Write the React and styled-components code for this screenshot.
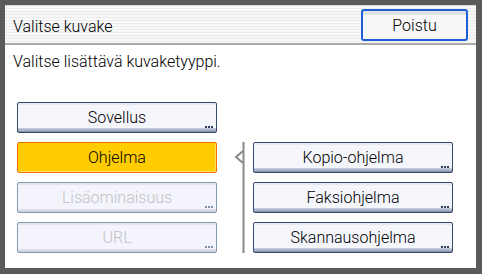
import React from "react";
import styled, { createGlobalStyle, css } from "styled-components";

const Global = createGlobalStyle`
  html, body { margin: 0; padding: 0; background: #5c5c5c; }
  body { font-family: Roboto, "Liberation Sans", Arial, sans-serif; font-weight: 300; }
`;

const Frame = styled.div`
  width: 482px;
  height: 274px;
  box-sizing: border-box;
  background: #5a5a5a;
  padding: 5px 6px 6px 5px;
  display: flex;
`;

const Panel = styled.div`
  flex: 1;
  background: #ffffff;
  display: flex;
  flex-direction: column;
`;

const Header = styled.div`
  height: 40px;
  flex: none;
  box-sizing: border-box;
  display: flex;
  align-items: center;
  justify-content: space-between;
  padding: 0 8px 0 8px;
  background: repeating-linear-gradient(
    to bottom,
    #f8f8f8 0px,
    #f8f8f8 2px,
    #ececec 2px,
    #ececec 3px
  );
  border-top: 1px solid #d8d8d8;
  border-bottom: 2px solid #a9a9a9;
`;

const Title = styled.div`
  font-size: 16px;
  color: #000;
  padding-top: 3px;
`;

const ExitButton = styled.button`
  width: 107px;
  height: 32px;
  box-sizing: border-box;
  border: 2px solid #1d5fd8;
  border-radius: 3px;
  background: linear-gradient(to bottom, #e2e2e2 0, #e2e2e2 4px, #f7f7f7 4px, #f7f7f7 100%);
  font-family: inherit;
  font-weight: 300;
  font-size: 16px;
  color: #000;
  padding: 1px 0 0;
  margin-top: 1px;
`;

const Prompt = styled.div`
  flex: none;
  font-size: 16px;
  line-height: 18px;
  color: #000;
  padding: 8px 8px 0;
  height: 57px;
  box-sizing: border-box;
`;

const Grid = styled.div`
  display: grid;
  grid-template-columns: 200px 36px 200px;
  grid-template-rows: repeat(4, 31px);
  row-gap: 9px;
  padding-left: 12px;
`;

const Btn = styled.div`
  position: relative;
  box-sizing: border-box;
  display: flex;
  align-items: center;
  justify-content: center;
  font-size: 16px;
  border-radius: 2px;
  grid-column: ${(p) => p.$col};
  grid-row: ${(p) => p.$row};
  padding-bottom: 1px;
  ${(p) =>
    p.$variant === "selected"
      ? css`
          background: #ffcc00;
          border: 1px solid #f06e00;
          box-shadow: inset -1px -1px 0 #ffe25a;
          color: #000;
        `
      : p.$variant === "disabled"
      ? css`
          border: 1px solid #8298b2;
          color: #c2c2c2;
          background: linear-gradient(
            to bottom,
            #e6e6ea 0,
            #e6e6ea 2px,
            #f4f5fc 2px,
            #f4f5fc calc(100% - 3px),
            #dfe3ee calc(100% - 3px),
            #c8cfdc 100%
          );
        `
      : css`
          border: 1px solid #34496b;
          color: #000;
          background: linear-gradient(
            to bottom,
            #e8e9ef 0,
            #e8e9ef 2px,
            #f5f6fc 2px,
            #f5f6fc calc(100% - 4px),
            #c9d0de calc(100% - 4px),
            #9aa7bc calc(100% - 1px),
            #6f809c 100%
          );
        `}
`;

const Dots = styled.span`
  position: absolute;
  right: 3px;
  bottom: 4px;
  display: flex;
  gap: 1px;
  & > i {
    width: 2px;
    height: 2px;
    background: ${(p) => (p.$disabled ? "#7f8fab" : "#2e3f60")};
  }
`;

const Bracket = styled.svg`
  grid-column: 2;
  grid-row: 2 / 5;
  width: 36px;
  height: 111px;
  display: block;
`;

const MoreDots = ({ disabled }) => (
  <Dots $disabled={disabled}>
    <i />
    <i />
    <i />
  </Dots>
);

const leftButtons = [
  { label: "Sovellus", variant: "normal", dots: true },
  { label: "Ohjelma", variant: "selected", dots: false },
  { label: "Lisäominaisuus", variant: "disabled", dots: true },
  { label: "URL", variant: "disabled", dots: true },
];

const rightButtons = ["Kopio-ohjelma", "Faksiohjelma", "Skannausohjelma"];

export default function App() {
  return (
    <>
      <Global />
      <Frame>
        <Panel>
          <Header>
            <Title>Valitse kuvake</Title>
            <ExitButton>Poistu</ExitButton>
          </Header>
          <Prompt>Valitse lisättävä kuvaketyyppi.</Prompt>
          <Grid>
            {leftButtons.map((b, i) => (
              <Btn key={b.label} $col={1} $row={i + 1} $variant={b.variant}>
                {b.label}
                {b.dots && <MoreDots disabled={b.variant === "disabled"} />}
              </Btn>
            ))}
            <Bracket viewBox="0 0 36 111">
              <line x1="26.5" y1="0" x2="26.5" y2="111" stroke="#8a8a8a" strokeWidth="2" />
              <polyline
                points="26,9 19,15 26,21"
                fill="none"
                stroke="#8a8a8a"
                strokeWidth="2"
              />
            </Bracket>
            {rightButtons.map((label, i) => (
              <Btn key={label} $col={3} $row={i + 2} $variant="normal">
                {label}
                <MoreDots />
              </Btn>
            ))}
          </Grid>
        </Panel>
      </Frame>
    </>
  );
}
